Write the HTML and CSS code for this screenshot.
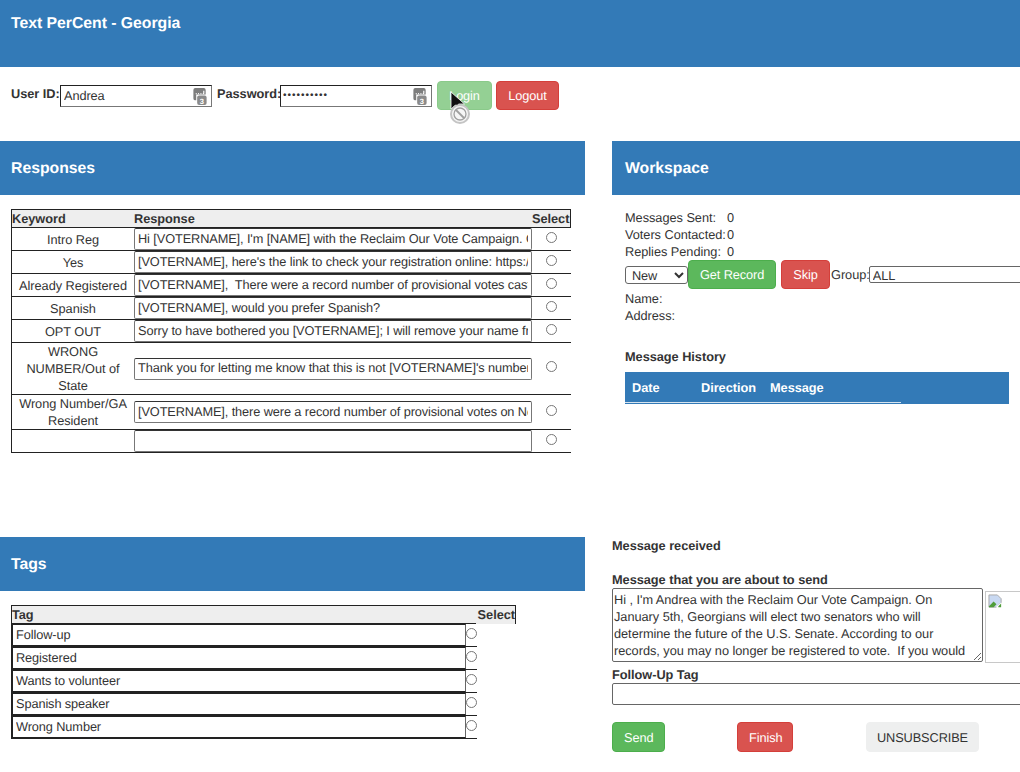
FILE: index.html
```html
<!DOCTYPE html>
<html>
    <head>
        <meta charset="utf-8">
        <title>Text PerCent - Georgia</title>
        <link rel="stylesheet" href="styles.css">
    </head>

    <body>
        <div class="topbar">Text PerCent - Georgia</div>

        <div class="loginrow">
            <label class="loginlabel">User ID:</label>
            <span class="keyfield">
                <input class="logininput" type="text" value="Andrea">
                <svg class="keyicon" viewBox="0 0 14 18"><path d="M2 0h9a2 2 0 0 1 2 2v5H3v6H2a2 2 0 0 1-2-2V2a2 2 0 0 1 2-2z" fill="#7d7d7d"/><rect x="4" y="8" width="10" height="10" rx="2" fill="#8a8a8a"/><path d="M2.5 6h1M5 6h1M7.500 6h1M10 6h1M11 3v3" stroke="#fff" stroke-width="1.200"/><text x="9" y="16.500" class="keynum">3</text></svg>
            </span>
            <label class="loginlabel passlabel">Password:</label>
            <span class="keyfield">
                <input class="logininput passinput" type="password" value="andrea1234">
                <svg class="keyicon" viewBox="0 0 14 18"><path d="M2 0h9a2 2 0 0 1 2 2v5H3v6H2a2 2 0 0 1-2-2V2a2 2 0 0 1 2-2z" fill="#7d7d7d"/><rect x="4" y="8" width="10" height="10" rx="2" fill="#8a8a8a"/><path d="M2.5 6h1M5 6h1M7.500 6h1M10 6h1M11 3v3" stroke="#fff" stroke-width="1.200"/><text x="9" y="16.500" class="keynum">3</text></svg>
            </span>
            <span class="loginbtns">
                <button class="btn btn-green btn-disabled login-btn" type="button">Login</button>
                <button class="btn btn-red logout-btn" type="button">Logout</button>
                <svg class="cursor" viewBox="0 0 32 44">
                    <path d="M2 1v17l4.500-4 3.500 7 2.500-1-3-7h6z" fill="#111" stroke="#fff" stroke-width="0.800"/>
                    <circle cx="11" cy="23" r="9" fill="#f6f6f6" stroke="#c4c4c4" stroke-width="2"/>
                    <circle cx="11" cy="23" r="6" fill="none" stroke="#a0a0a0" stroke-width="1.300"/>
                    <path d="M7 19l8 8" stroke="#a0a0a0" stroke-width="1.800"/>
                </svg>
            </span>
        </div>

        <div class="maingrid">
            <section class="panel">
                <h3 class="panelhead">Responses</h3>
                <table class="resptable">
                    <tr class="headrow">
                        <th class="col-key">Keyword</th>
                        <th class="col-resp">Response</th>
                        <th class="col-sel">Select</th>
                    </tr>
                    <tr><td class="kw">Intro Reg</td><td><input class="resp" type="text" value="Hi [VOTERNAME], I'm [NAME] with the Reclaim Our Vote Campaign. On January 5th"></td><td class="sel"><input type="radio" name="resp"></td></tr>
                    <tr><td class="kw">Yes</td><td><input class="resp" type="text" value="[VOTERNAME], here's the link to check your registration online: https://www.mvp.sos.ga.gov"></td><td class="sel"><input type="radio" name="resp"></td></tr>
                    <tr><td class="kw">Already Registered</td><td><input class="resp" type="text" value="[VOTERNAME],  There were a record number of provisional votes cast in November"></td><td class="sel"><input type="radio" name="resp"></td></tr>
                    <tr><td class="kw">Spanish</td><td><input class="resp" type="text" value="[VOTERNAME], would you prefer Spanish?"></td><td class="sel"><input type="radio" name="resp"></td></tr>
                    <tr><td class="kw">OPT OUT</td><td><input class="resp" type="text" value="Sorry to have bothered you [VOTERNAME]; I will remove your name from our list"></td><td class="sel"><input type="radio" name="resp"></td></tr>
                    <tr class="tallrow"><td class="kw">WRONG NUMBER/Out of State</td><td><input class="resp" type="text" value="Thank you for letting me know that this is not [VOTERNAME]'s number. I will remove"></td><td class="sel"><input type="radio" name="resp"></td></tr>
                    <tr class="midrow"><td class="kw">Wrong Number/GA Resident</td><td><input class="resp" type="text" value="[VOTERNAME], there were a record number of provisional votes on November 3rd"></td><td class="sel"><input type="radio" name="resp"></td></tr>
                    <tr><td class="kw"></td><td><input class="resp" type="text"></td><td class="sel"><input type="radio" name="resp"></td></tr>
                </table>
            </section>

            <section class="panel clip">
                <h3 class="panelhead workhead">Workspace</h3>
                <div class="workbody">
                    <div class="stats">
                        <div class="statrow"><span class="statname">Messages Sent:</span>0</div>
                        <div class="statrow"><span class="statname">Voters Contacted:</span>0</div>
                        <div class="statrow"><span class="statname">Replies Pending:</span>0</div>
                    </div>
                    <div class="recordrow">
                        <select class="statussel"><option>New</option></select>
                        <button class="btn btn-green getrecord" type="button">Get Record</button>
                        <button class="btn btn-red skip" type="button">Skip</button>
                        <span>Group:</span>
                        <input class="groupinput" type="text" value="ALL">
                    </div>
                    <div class="voter">
                        <div>Name:</div>
                        <div>Address:</div>
                    </div>
                    <div class="histtitle">Message History</div>
                    <div class="histhead">
                        <table class="histtable">
                            <tr>
                                <th class="h-date">Date</th>
                                <th class="h-dir">Direction</th>
                                <th>Message</th>
                            </tr>
                        </table>
                    </div>
                </div>
            </section>

            <section class="panel">
                <h3 class="panelhead">Tags</h3>
                <table class="tagtable">
                    <tr class="headrow">
                        <th class="col-tag">Tag</th>
                        <th class="col-tagsel">Select</th>
                    </tr>
                    <tr><td colspan="2"><div class="tagline"><input class="tag" type="text" value="Follow-up"><input class="tagradio" type="radio" name="tag"></div></td></tr>
                    <tr><td colspan="2"><div class="tagline"><input class="tag" type="text" value="Registered"><input class="tagradio" type="radio" name="tag"></div></td></tr>
                    <tr><td colspan="2"><div class="tagline"><input class="tag" type="text" value="Wants to volunteer"><input class="tagradio" type="radio" name="tag"></div></td></tr>
                    <tr><td colspan="2"><div class="tagline"><input class="tag" type="text" value="Spanish speaker"><input class="tagradio" type="radio" name="tag"></div></td></tr>
                    <tr><td colspan="2"><div class="tagline"><input class="tag" type="text" value="Wrong Number"><input class="tagradio" type="radio" name="tag"></div></td></tr>
                </table>
            </section>

            <section class="panel clip">
                <div class="boldline received">Message received</div>
                <div class="boldline abouttosend">Message that you are about to send</div>
                <div class="msgrow">
                    <textarea class="msgbox">Hi , I'm Andrea with the Reclaim Our Vote Campaign. On January 5th, Georgians will elect two senators who will determine the future of the U.S. Senate. According to our records, you may no longer be registered to vote.  If you would like to check your registration, reply YES.</textarea>
                    <div class="brokenimg">
                        <svg class="brokenicon" viewBox="0 0 16 16"><path d="M1 1h9l4 4v4l-5 5H1z" fill="#c9d9f2" stroke="#a9a9a9"/><path d="M1 13l5-5 3 3-3 3H1z" fill="#4f9d3a"/><path d="M8 14l6-5v5z" fill="#fff"/><path d="M11 13l3-3v4h-3z" fill="#4f9d3a"/></svg>
                    </div>
                </div>
                <div class="boldline taglabel">Follow-Up Tag</div>
                <input class="followup" type="text">
                <div class="sendbtns">
                    <button class="btn btn-green send" type="button">Send</button>
                    <button class="btn btn-red finish" type="button">Finish</button>
                    <button class="btn btn-grey unsub" type="button">UNSUBSCRIBE</button>
                </div>
            </section>
        </div>
    </body>
</html>
```

FILE: styles.css
```css
html, body {
    margin: 0px;
    background: #fff;
    overflow: hidden;
}

body {
    font-family: "Liberation Sans", Arial, sans-serif;
    font-size: 12.750px;
    letter-spacing: -0.030px;
    line-height: 17px;
    color: #333;
    text-rendering: geometricPrecision;
}

input, select, textarea, button {
    font-family: "Liberation Sans", Arial, sans-serif;
    font-size: 12.750px;
    letter-spacing: -0.100px;
    color: #333;
    box-sizing: border-box;
    text-rendering: geometricPrecision;
}

.topbar {
    height: 67px;
    box-sizing: border-box;
    padding: 15px 11px 0;
    background: #337ab7;
    color: #fff;
    font-size: 15.800px;
    line-height: 18px;
    font-weight: bold;
}

/* login */
.loginrow {
    display: flex;
    align-items: flex-start;
    height: 74px;
    box-sizing: border-box;
    padding: 14px 0 0 11px;
}

.loginlabel {
    flex: none;
    font-weight: bold;
    margin-top: 4px;
    width: 49px;
    white-space: nowrap;
}

.passlabel {
    width: 63px;
    margin-left: 5px;
}

.keyfield {
    position: relative;
    display: block;
    flex: none;
    width: 152px;
    height: 22px;
    margin-top: 4px;
}

.logininput {
    width: 100%;
    height: 22px;
    padding: 0 3px 1px;
    border: 1px solid #777;
    border-top-color: #222;
    border-left-color: #222;
    border-radius: 0;
}

.passinput {
    padding: 0 2px 1px;
    font-size: 10px;
    letter-spacing: 1px;
}

.keyicon {
    position: absolute;
    top: 3px;
    right: 5px;
    width: 14px;
    height: 17px;
}

.keynum {
    font-size: 8px;
    font-weight: bold;
    fill: #fff;
    text-anchor: middle;
}

.loginbtns {
    position: relative;
    display: flex;
    gap: 4px;
    margin-left: 5px;
}

.cursor {
    position: absolute;
    left: 12px;
    top: 10px;
    width: 32px;
    height: 44px;
}

/* buttons */
.btn {
    display: block;
    height: 29px;
    padding: 0 11px;
    border: 1px solid transparent;
    border-radius: 4px;
    color: #fff;
    line-height: 27px;
}

.btn-green {
    background: #5cb85c;
    border-color: #4cae4c;
}

.btn-red {
    background: #d9534f;
    border-color: #d43f3a;
}

.btn-grey {
    background: #eeefef;
    border-color: #eeefef;
    color: #333;
}

.btn-disabled {
    opacity: 0.65;
}

.login-btn {
    width: 55px;
}

.logout-btn {
    width: 63px;
}

/* main layout */
.maingrid {
    display: grid;
    grid-template-columns: 585px 1fr;
    grid-template-rows: 396px auto;
    column-gap: 27px;
}

.panel {
    min-width: 0;
}

.clip {
    overflow: hidden;
}

.panelhead {
    margin: 0;
    height: 54px;
    box-sizing: border-box;
    padding: 19px 11px 0;
    background: #337ab7;
    color: #fff;
    font-size: 15.800px;
    line-height: 18px;
    font-weight: bold;
}

.workhead {
    padding-left: 13px;
}

/* responses table */
.resptable, .tagtable {
    border-collapse: separate;
    border-spacing: 0;
    table-layout: fixed;
    margin-left: 11px;
}

.resptable {
    width: 560px;
    margin-top: 14px;
}

.resptable th, .tagtable th {
    height: 17px;
    padding: 0;
    background: #eeeeee;
    text-align: left;
    font-weight: bold;
    line-height: 17px;
    border-top: 1px solid #222;
    border-bottom: 1px solid #222;
}

.resptable td, .tagtable td {
    padding: 0;
    height: 22px;
    border-bottom: 1px solid #222;
}

.resptable th:first-child, .resptable td:first-child, .tagtable th:first-child, .tagtable td:first-child {
    border-left: 1px solid #222;
}

.resptable th:last-child, .tagtable th:last-child {
    border-right: 1px solid #222;
}

.col-key {
    width: 122px;
}

.col-sel {
    width: 38px;
}

.kw {
    text-align: center;
}

.resp {
    display: block;
    width: 398px;
    height: 22px;
    padding: 0 3px 2px;
    border: 1px solid #777;
    border-top-color: #333;
    border-radius: 2px;
}

.tallrow td {
    height: 51px;
}

.midrow td {
    height: 34px;
}

.sel {
    text-align: center;
}

.sel input {
    width: 11px;
    height: 11px;
    margin: 0 0 5px;
    vertical-align: middle;
}

/* workspace */
.workbody {
    padding: 14px 0 0 13px;
}

.statrow {
    white-space: nowrap;
}

.statname {
    display: inline-block;
    width: 102px;
}

.recordrow {
    display: flex;
    align-items: center;
    white-space: nowrap;
    height: 29px;
}

.statussel {
    flex: none;
    width: 63px;
    height: 18px;
    padding: 0 0 0 2px;
    background: #fff;
    border: 1px solid #666;
    border-radius: 3px;
}

.getrecord {
    width: 88px;
    flex: none;
}

.skip {
    width: 49px;
    margin: 0 1px 0 5px;
    flex: none;
}

.groupinput {
    flex: none;
    width: 300px;
    height: 17px;
    margin-left: -1px;
    padding: 1px 3px 0;
    border: 1px solid #666;
    border-radius: 2px;
}

.voter {
    margin-top: 1px;
}

.histtitle {
    margin-top: 24px;
    font-weight: bold;
}

.histhead {
    width: 384px;
    height: 32px;
    margin-top: 7px;
    background: #337ab7;
}

.histtable {
    width: 276px;
    height: 31px;
    border-collapse: collapse;
    border-bottom: 1px solid #d7e4ef;
}

.histtable th {
    padding: 0 0 0 7px;
    text-align: left;
    color: #fff;
    font-weight: bold;
}

.h-date {
    width: 62px;
}

.h-dir {
    width: 62px;
}

/* tags */
.tagtable {
    width: 505px;
    margin-top: 14px;
}

.tagtable .col-tagsel {
    width: 39px;
    text-align: right;
    border-bottom: none;
    padding-bottom: 1px;
}

.tagtable td {
    width: 465px;
    border-bottom: none;
}

.tagtable td .tagline {
    display: flex;
    align-items: flex-start;
    width: 465px;
    height: 23px;
    box-sizing: border-box;
    background: linear-gradient(#222, #222) no-repeat 0 100% / 100% 1px;
}

.tag {
    display: block;
    flex: none;
    width: 454px;
    height: 22px;
    padding: 0 3px 2px;
    border: 1px solid #666;
    border-top-color: #222;
    border-left-color: #222;
    border-bottom-color: #222;
    border-radius: 0;
}

.tagradio {
    flex: none;
    width: 11px;
    height: 11px;
    margin: 4px 0 0 0;
}

/* send area */
.boldline {
    font-weight: bold;
}

.abouttosend {
    margin-top: 17px;
}

.msgrow {
    display: flex;
    align-items: flex-start;
    gap: 2px;
}

.msgbox {
    flex: none;
    width: 371px;
    height: 74px;
    padding: 2px 6px 3px 1px;
    letter-spacing: -0.030px;
    line-height: 17px;
    border: 1px solid #666;
    border-radius: 2px;
    overflow: hidden;
}

.brokenimg {
    flex: none;
    width: 60px;
    height: 72px;
    margin-top: 3px;
    box-sizing: border-box;
    padding: 2px 0 0 2px;
    border: 1px solid #c8c8c8;
}

.brokenicon {
    display: block;
    width: 15px;
    height: 15px;
}

.taglabel {
    margin-top: 3px;
}

.followup {
    display: block;
    width: 500px;
    height: 22px;
    border: 1px solid #666;
    border-radius: 2px;
}

.sendbtns {
    display: flex;
    margin-top: 17px;
}

.send {
    width: 53px;
    height: 30px;
}

.finish {
    width: 56px;
    height: 30px;
    margin-left: 72px;
}

.unsub {
    width: 113px;
    height: 30px;
    margin-left: 73px;
    padding: 0;
}
```
